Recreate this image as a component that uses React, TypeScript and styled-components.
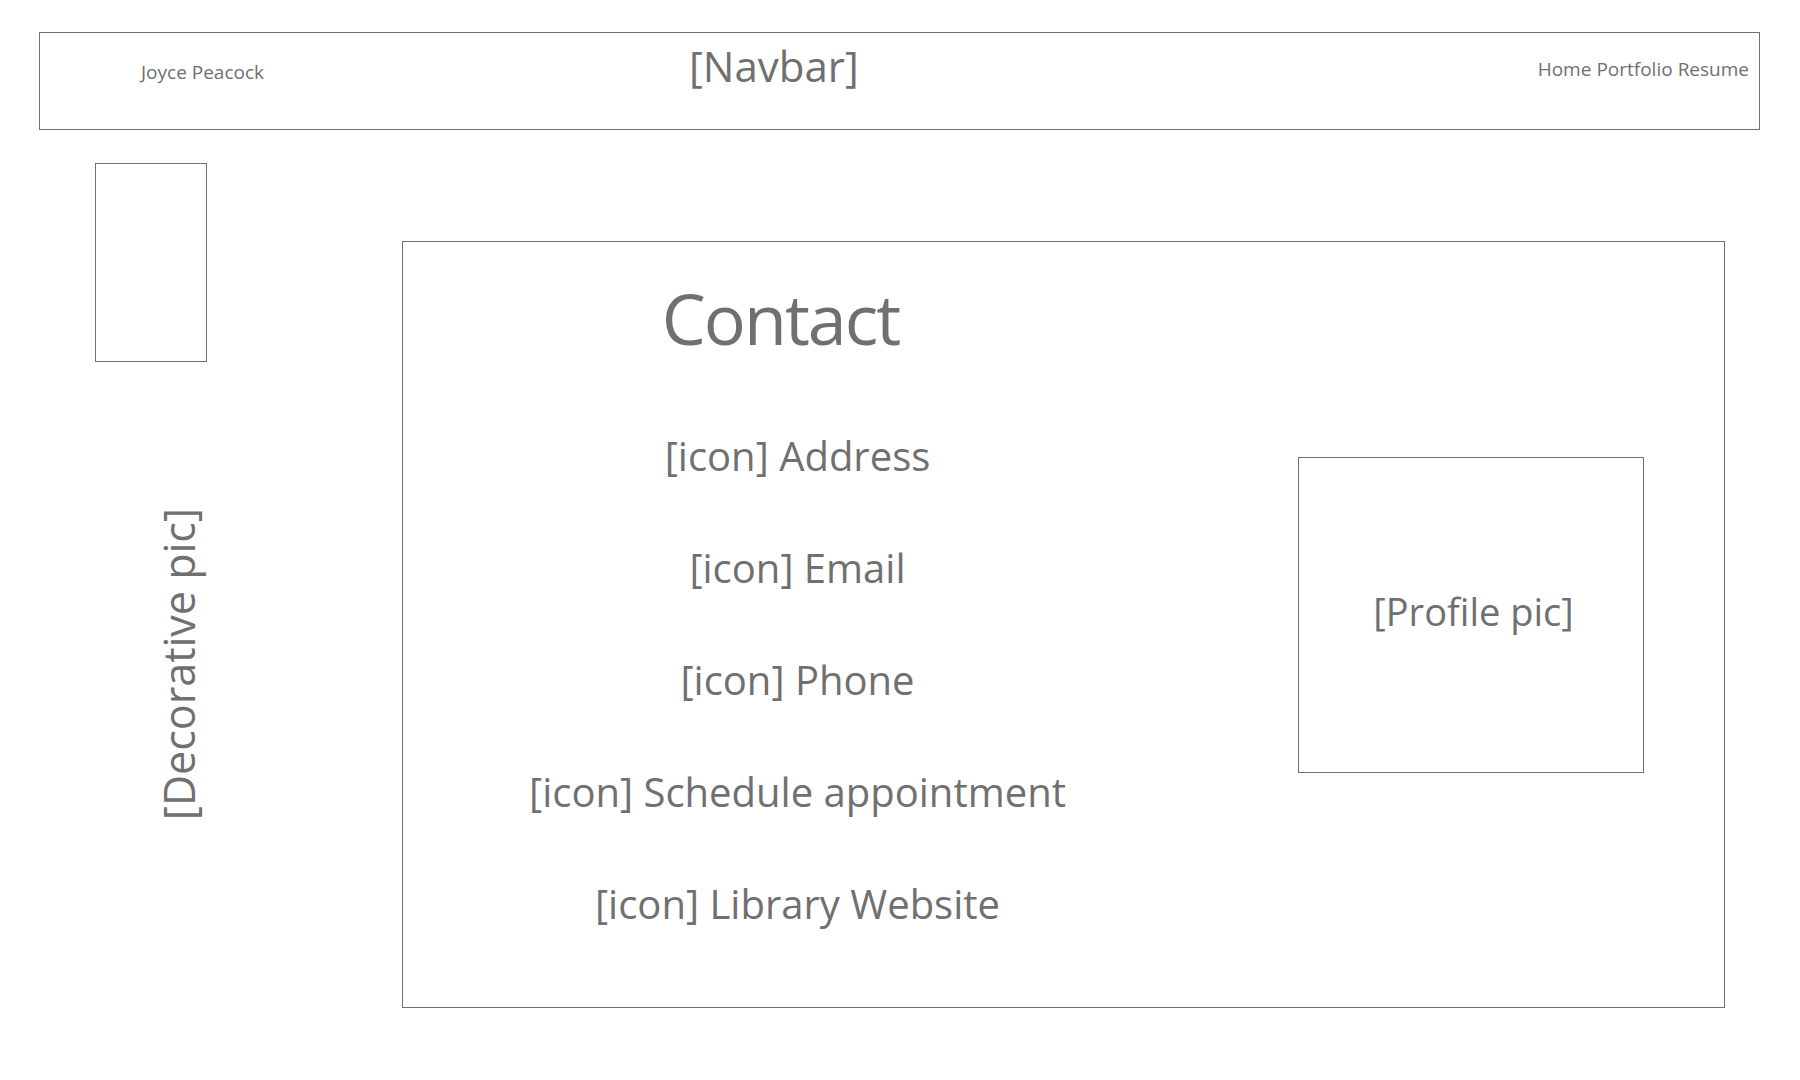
import React from 'react'
import styled, { createGlobalStyle } from 'styled-components'

const GlobalStyle = createGlobalStyle`
  body {
    margin: 0;
    background: #ffffff;
    color: #707070;
    font-family: 'Open Sans', 'Noto Sans', sans-serif;
  }
  * {
    box-sizing: border-box;
  }
`

const Page = styled('div')`
  width: 1800px;
  height: 1080px;
  padding: 32px 40px 0 39px;
`

const Navbar = styled('header')`
  display: flex;
  align-items: center;
  height: 98px;
  padding: 0 10px 14px 101px;
  border: 1px solid #707070;
`

const Brand = styled('span')`
  margin-top: -4px;
  font-size: 19px;
  line-height: 1;
`

const NavTitle = styled('span')`
  margin: -17px 0 0 425px;
  font-size: 42px;
  line-height: 1;
`

const NavLinks = styled('nav')`
  display: flex;
  gap: 5px;
  margin-left: auto;
  margin-top: -10px;
  font-size: 19px;
  line-height: 1;
`

const Body = styled('main')`
  display: flex;
  align-items: flex-start;
`

const Sidebar = styled('aside')`
  display: flex;
  flex-direction: column;
  width: 363px;
  padding: 33px 0 0 56px;
`

const DecorFrame = styled('div')`
  width: 112px;
  height: 199px;
  border: 1px solid #707070;
`

const DecorLabel = styled('span')`
  writing-mode: vertical-rl;
  transform: rotate(180deg);
  margin: 146px 0 0 62px;
  font-size: 43px;
  line-height: 1;
`

const Card = styled('section')`
  display: flex;
  align-items: flex-start;
  width: 1323px;
  height: 767px;
  margin-top: 111px;
  border: 1px solid #707070;
`

const ContactColumn = styled('div')`
  display: flex;
  flex-direction: column;
  align-items: center;
  width: 789px;
  padding-top: 41px;
`

const Title = styled('h1')`
  margin: 0 34px 47px 0;
  font-size: 70px;
  font-weight: 400;
  letter-spacing: -2px;
  line-height: 1;
`

const ContactList = styled('ul')`
  margin: 0;
  padding: 0;
  list-style: none;
  text-align: center;
`

const ContactItem = styled('li')`
  height: 112px;
  font-size: 40px;
  line-height: 112px;
  white-space: nowrap;
`

const ProfileFrame = styled('div')`
  display: flex;
  align-items: center;
  justify-content: center;
  width: 346px;
  height: 316px;
  margin: 215px 0 0 106px;
  padding: 0 0 8px 5px;
  border: 1px solid #707070;
  font-size: 38px;
`

const contacts = [
  'Address',
  'Email',
  'Phone',
  'Schedule appointment',
  'Library Website',
]

export default function App() {
  return (
    <Page>
      <GlobalStyle />
      <Navbar>
        <Brand>Joyce Peacock</Brand>
        <NavTitle>[Navbar]</NavTitle>
        <NavLinks>
          <span>Home</span>
          <span>Portfolio</span>
          <span>Resume</span>
        </NavLinks>
      </Navbar>
      <Body>
        <Sidebar>
          <DecorFrame />
          <DecorLabel>[Decorative pic]</DecorLabel>
        </Sidebar>
        <Card>
          <ContactColumn>
            <Title>Contact</Title>
            <ContactList>
              {contacts.map((label) => (
                <ContactItem key={label}>[icon] {label}</ContactItem>
              ))}
            </ContactList>
          </ContactColumn>
          <ProfileFrame>[Profile pic]</ProfileFrame>
        </Card>
      </Body>
    </Page>
  )
}
